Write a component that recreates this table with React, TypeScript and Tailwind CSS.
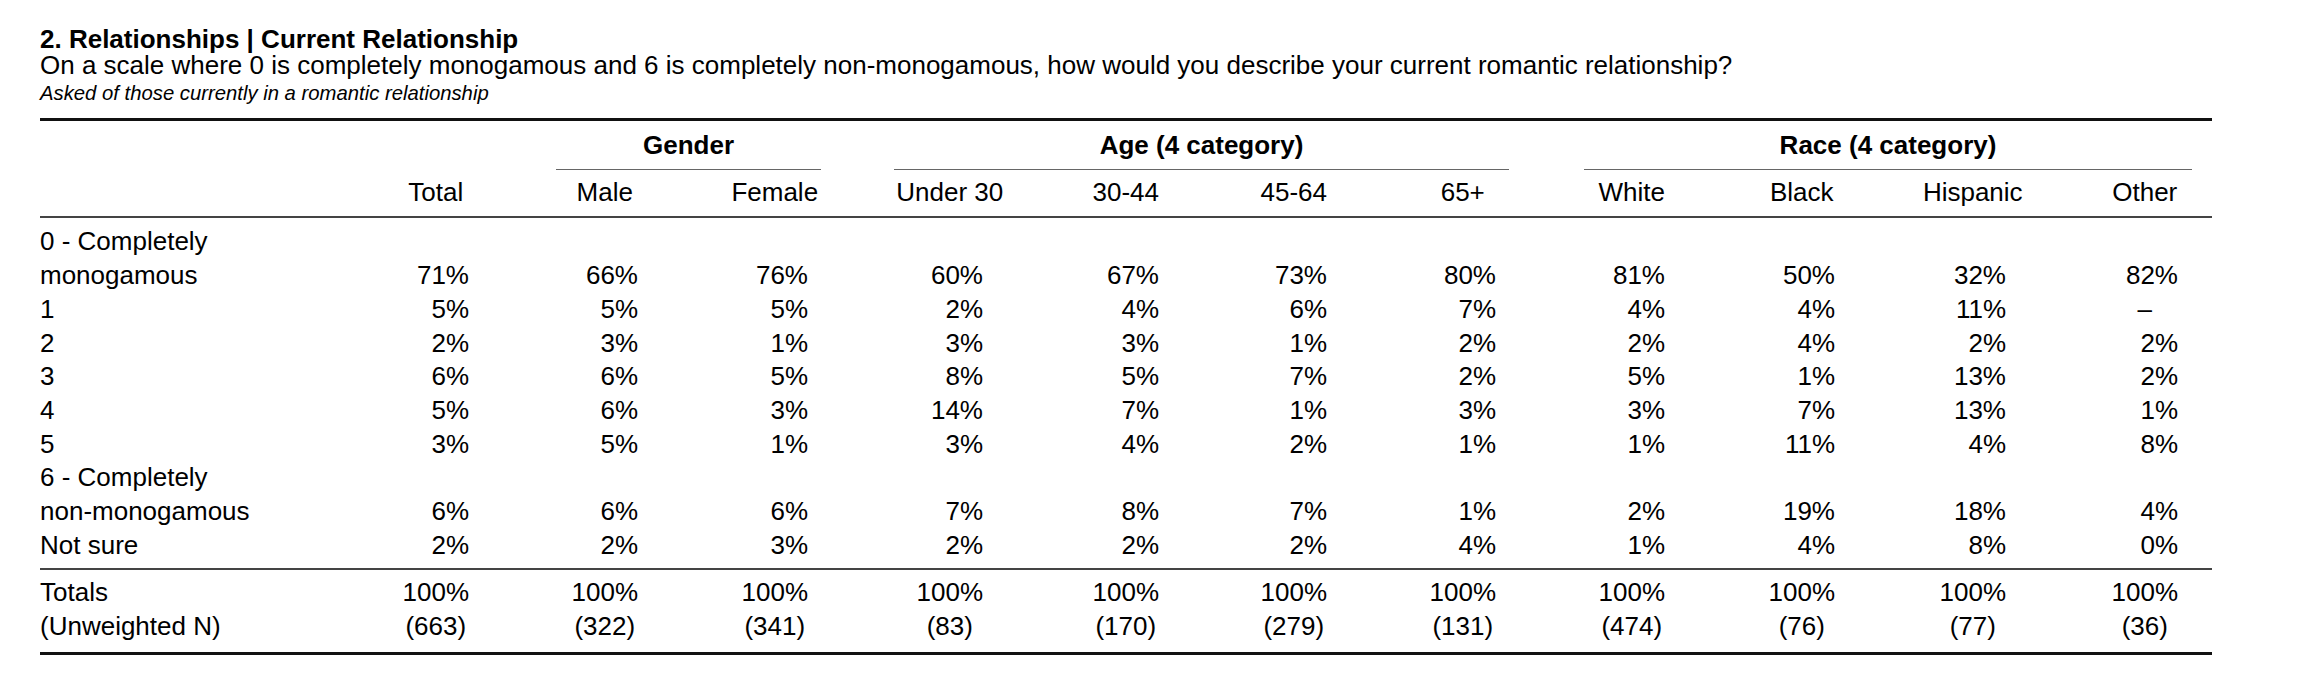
import React from "react";

const GRID =
  "grid grid-cols-[260px_169px_169px_170px_175px_176px_168px_169px_169px_170px_171px_172px_34px] items-end";

const COLS = [
  "Total",
  "Male",
  "Female",
  "Under 30",
  "30-44",
  "45-64",
  "65+",
  "White",
  "Black",
  "Hispanic",
  "Other",
];

type Row = { label: React.ReactNode; values: string[] };

const ROWS: Row[] = [
  {
    label: <>0 - Completely monogamous</>,
    values: ["71%", "66%", "76%", "60%", "67%", "73%", "80%", "81%", "50%", "32%", "82%"],
  },
  { label: "1", values: ["5%", "5%", "5%", "2%", "4%", "6%", "7%", "4%", "4%", "11%", "–"] },
  { label: "2", values: ["2%", "3%", "1%", "3%", "3%", "1%", "2%", "2%", "4%", "2%", "2%"] },
  { label: "3", values: ["6%", "6%", "5%", "8%", "5%", "7%", "2%", "5%", "1%", "13%", "2%"] },
  { label: "4", values: ["5%", "6%", "3%", "14%", "7%", "1%", "3%", "3%", "7%", "13%", "1%"] },
  { label: "5", values: ["3%", "5%", "1%", "3%", "4%", "2%", "1%", "1%", "11%", "4%", "8%"] },
  {
    label: (
      <>
        6 - Completely <span className="whitespace-nowrap">non-monogamous</span>
      </>
    ),
    values: ["6%", "6%", "6%", "7%", "8%", "7%", "1%", "2%", "19%", "18%", "4%"],
  },
  { label: "Not sure", values: ["2%", "2%", "3%", "2%", "2%", "2%", "4%", "1%", "4%", "8%", "0%"] },
];

const NS = ["(663)", "(322)", "(341)", "(83)", "(170)", "(279)", "(131)", "(474)", "(76)", "(77)", "(36)"];

function ValueCell({ v, center }: { v: string; center?: boolean }) {
  const isDash = v === "–";
  return (
    <div className="flex justify-end">
      <div className={center || isDash ? "w-[66.5px] text-center whitespace-nowrap" : "w-[66.5px] text-right whitespace-nowrap"}>
        {v}
      </div>
    </div>
  );
}

function HeadCell({ h }: { h: string }) {
  return (
    <div className="flex justify-end">
      <div className="w-[66.5px] flex justify-center">
        <span className="whitespace-nowrap shrink-0">{h}</span>
      </div>
    </div>
  );
}

export default function App() {
  return (
    <div className="w-[2298px] h-[676px] bg-white text-black font-['Liberation_Sans',Arial,sans-serif] pl-[40px] pt-[26px] overflow-hidden">
      <div className="text-[26px] leading-[26px] font-bold whitespace-nowrap">
        2. Relationships | Current Relationship
      </div>
      <div className="text-[26px] leading-[26px] whitespace-nowrap">
        On a scale where 0 is completely monogamous and 6 is completely non-monogamous, how would you describe your
        current romantic relationship?
      </div>
      <div className="text-[20.3px] leading-[22px] italic mt-[4px] whitespace-nowrap">
        Asked of those currently in a romantic relationship
      </div>

      <div className="mt-[14px] w-[2172px] border-t-[3px] border-[#111] text-[26px] leading-[33.7px]">
        {/* group headers */}
        <div className={GRID + " pt-[8px]"}>
          <div className="col-start-3 col-span-2 ml-[87px] mr-[-13px] border-b border-[#666] pb-[6px] text-center font-bold whitespace-nowrap">
            Gender
          </div>
          <div className="col-start-5 col-span-4 ml-[86px] mr-[-13px] border-b border-[#666] pb-[6px] text-center font-bold whitespace-nowrap">
            Age (4 category)
          </div>
          <div className="col-start-9 col-span-4 ml-[88px] mr-[-14px] border-b border-[#666] pb-[6px] text-center font-bold whitespace-nowrap">
            Race (4 category)
          </div>
        </div>

        {/* column headers */}
        <div className={GRID + " pt-[6px] pb-[7px] border-b-2 border-[#444]"}>
          <div />
          {COLS.map((c) => (
            <HeadCell key={c} h={c} />
          ))}
          <div />
        </div>

        {/* body */}
        <div className="pt-[7px] pb-[6px] border-b-2 border-[#444]">
          {ROWS.map((r, i) => (
            <div key={i} className={GRID}>
              <div>{r.label}</div>
              {r.values.map((v, j) => (
                <ValueCell key={j} v={v} />
              ))}
              <div />
            </div>
          ))}
        </div>

        {/* totals */}
        <div className="pt-[6px] pb-[8px] border-b-[3px] border-[#111]">
          <div className={GRID}>
            <div>Totals</div>
            {COLS.map((c) => (
              <ValueCell key={c} v="100%" />
            ))}
            <div />
          </div>
          <div className={GRID}>
            <div className="whitespace-nowrap">(Unweighted N)</div>
            {NS.map((n, j) => (
              <ValueCell key={j} v={n} center />
            ))}
            <div />
          </div>
        </div>
      </div>
    </div>
  );
}
